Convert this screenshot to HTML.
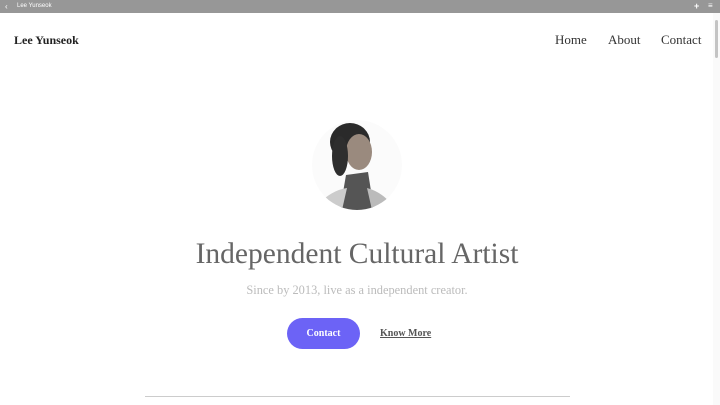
<!DOCTYPE html>
<html><head><style>
body{margin:0;width:720px;height:405px;overflow:hidden;background:#fff;font-family:"Liberation Serif",serif;position:relative}
.top{position:absolute;left:0;top:0;width:720px;height:13px;background:#979797;color:#fff;font:6px "Liberation Sans",sans-serif}
.sb{position:absolute;right:0;top:13px;width:7px;height:392px;background:#fafafa}
.sb div{position:absolute;left:2px;top:7px;width:3px;height:38px;background:#c4c4c4;border-radius:2px}
.a{position:absolute;white-space:nowrap}
</style></head><body>
<div class="top"><span class="a" style="left:5px;top:2px;font-size:8px">‹</span><span class="a" style="left:17px;top:3px">Lee Yunseok</span><span class="a" style="left:694px;top:1px;font-size:9px;font-weight:bold">+</span><span class="a" style="left:708px;top:1px;font-size:8px">≡</span></div>
<div class="sb"><div></div></div>
<div class="a" style="left:14px;top:33px;font-size:12px;font-weight:bold;color:#222">Lee Yunseok</div>
<div class="a" style="left:555px;top:32px;font-size:13px;color:#333">Home</div>
<div class="a" style="left:608px;top:32px;font-size:13px;color:#333">About</div>
<div class="a" style="left:661px;top:32px;font-size:13px;color:#333">Contact</div>
<svg class="a" style="left:312px;top:120px" width="90" height="90" viewBox="0 0 90 90">
<defs><clipPath id="c"><circle cx="45" cy="45" r="45"/></clipPath></defs>
<g clip-path="url(#c)"><rect width="90" height="90" fill="#fbfbfb"/>
<ellipse cx="38" cy="22" rx="20" ry="19" fill="#2a2a2a"/>
<ellipse cx="47" cy="32" rx="13" ry="18" fill="#9a8a7e"/>
<ellipse cx="28" cy="36" rx="8" ry="20" fill="#2e2e2e"/>
<path d="M34 55 L56 52 L62 90 L28 90Z" fill="#555"/>
<path d="M5 85 Q20 70 35 68 L30 90Z" fill="#ccc"/>
<path d="M55 68 Q70 72 80 85 L60 90Z" fill="#bbb"/></g></svg>
<div class="a" style="left:0;width:714px;text-align:center;top:238px;font-size:29.5px;color:#666">Independent Cultural Artist</div>
<div class="a" style="left:0;width:714px;text-align:center;top:283px;font-size:12.4px;color:#bbb">Since by 2013, live as a independent creator.</div>
<div class="a" style="left:287px;top:318px;width:73px;height:31px;border-radius:16px;background:#6c63f6;color:#fff;font-size:10px;font-weight:bold;text-align:center;line-height:31px">Contact</div>
<div class="a" style="left:380px;top:328px;font-size:10px;font-weight:bold;color:#555;text-decoration:underline">Know More</div>
<div class="a" style="left:145px;top:396px;width:425px;height:1px;background:#ccc"></div>
</body></html>
